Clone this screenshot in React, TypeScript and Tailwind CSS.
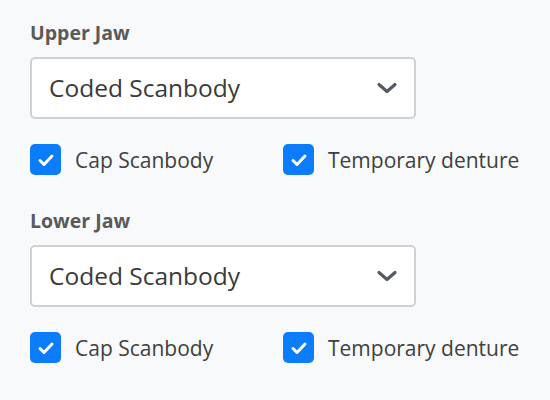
import { useState } from "react";

interface JawState {
    scanbody: string;
    cap: boolean;
    temporary: boolean;
}

const Check = ({ checked, label, onChange }: { checked: boolean; label: string; onChange: () => void }) => (
    <label className="flex items-center gap-[14px] cursor-pointer select-none">
        <span
            onClick={onChange}
            className={`w-[31px] h-[31px] rounded-[5px] flex items-center justify-center ${checked ? "bg-[#0b7cfc]" : "bg-white border-2 border-[#cfd1d4]"}`}
        >
            {checked && (
                <svg width="18" height="18" viewBox="0 0 18 18" fill="none">
                    <path d="M3 9.5l4 4 8-8.5" stroke="white" strokeWidth="3" strokeLinecap="round" strokeLinejoin="round" />
                </svg>
            )}
        </span>
        <span className="text-[21px] leading-[28px] text-[#404040]">{label}</span>
    </label>
);

const JawSection = ({ title, value, onToggle }: { title: string; value: JawState; onToggle: (k: "cap" | "temporary") => void }) => (
    <div className="flex flex-col">
        <h3 className="h-[24px] text-[19.5px] font-bold text-[#5a5a5a] leading-[24px]">{title}</h3>
        <div className="mt-[12px] w-[386px] h-[62px] bg-white border-2 border-[#cfd1d4] rounded-[5px] flex items-center justify-between pl-[17px] pr-[16px]">
            <span className="text-[24.5px] text-[#3a3a3a]">{value.scanbody}</span>
            <svg width="22" height="14" viewBox="0 0 22 14" fill="none">
                <path d="M3 3.5l8 7 8-7" stroke="#555b63" strokeWidth="3.2" strokeLinecap="round" strokeLinejoin="round" />
            </svg>
        </div>
        <div className="mt-[25px] flex items-center">
            <div className="w-[253px]">
                <Check checked={value.cap} label="Cap Scanbody" onChange={() => onToggle("cap")} />
            </div>
            <Check checked={value.temporary} label="Temporary denture" onChange={() => onToggle("temporary")} />
        </div>
    </div>
);

export default function App() {
    const [upper, setUpper] = useState<JawState>({ scanbody: "Coded Scanbody", cap: true, temporary: true });
    const [lower, setLower] = useState<JawState>({ scanbody: "Coded Scanbody", cap: true, temporary: true });

    return (
        <div className="w-[550px] h-[400px] bg-[#f8f9fa] px-[30px] pt-[21px] flex flex-col gap-[34px] font-['Open_Sans',sans-serif]">
            <JawSection title="Upper Jaw" value={upper} onToggle={(k) => setUpper({ ...upper, [k]: !upper[k] })} />
            <JawSection title="Lower Jaw" value={lower} onToggle={(k) => setLower({ ...lower, [k]: !lower[k] })} />
        </div>
    );
}
